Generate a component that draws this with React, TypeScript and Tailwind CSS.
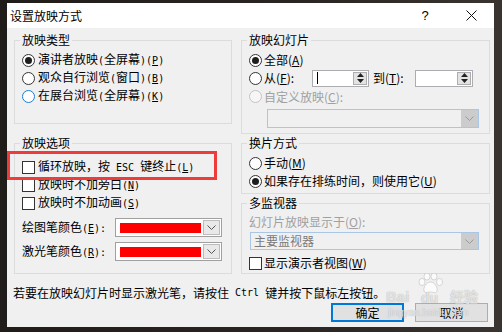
import React from "react";

// splits a label into CJK / ASCII runs; "&" marks the access-key letter
function Txt({ s, mono = false }: { s: string; mono?: boolean }) {
  const parts: { t: string; ascii: boolean; u: boolean }[] = [];
  for (let i = 0; i < s.length; i++) {
    let c = s[i];
    let u = false;
    if (c === "&") {
      u = true;
      c = s[++i];
    }
    const ascii = c.charCodeAt(0) < 128;
    const last = parts[parts.length - 1];
    if (last && last.ascii === ascii && !u && !last.u) last.t += c;
    else parts.push({ t: c, ascii, u });
  }
  return (
    <>
      {parts.map((p, i) => {
        const cls = p.ascii && mono ? "font-['DejaVu_Sans_Mono',monospace] text-[10px]" : "";
        return p.u ? (
          <u key={i} className={cls + " underline-offset-[1px]"}>
            {p.t}
          </u>
        ) : (
          <span key={i} className={cls + " whitespace-pre"}>
            {p.t}
          </span>
        );
      })}
    </>
  );
}

function Radio({ on = false, blue = false, disabled = false }: { on?: boolean; blue?: boolean; disabled?: boolean }) {
  return (
    <span
      className={`w-[13px] h-[13px] rounded-full border flex items-center justify-center shrink-0 ${
        disabled ? "border-[#c4c4c4] bg-[#f6f6f6]" : blue ? "border-[#1a7fd4] bg-white" : "border-[#333333] bg-white"
      }`}
    >
      {on && <span className="w-[7px] h-[7px] rounded-full bg-[#1e1e1e]" />}
    </span>
  );
}

function Check() {
  return <span className="w-[13px] h-[13px] border border-[#333333] bg-white shrink-0" />;
}

function Chevron({ color = "#555" }: { color?: string }) {
  return (
    <svg width="9" height="5" viewBox="0 0 9 5">
      <path d="M0.5 0.5 L4.5 4.5 L8.5 0.5" fill="none" stroke={color} strokeWidth="1" />
    </svg>
  );
}

function ColorCombo() {
  return (
    <div className="w-[107px] h-[19px] border border-[#a0a0a0] bg-white flex items-center pl-[4px] pr-[1px]">
      <div className="w-[81px] h-[10px] bg-[#ff0000]" />
      <div className="ml-auto w-[17px] h-[15px] border border-[#bcbcbc] bg-[#e9e9e9] flex items-center justify-center">
        <Chevron />
      </div>
    </div>
  );
}

function Spin({ w, caret = false }: { w: string; caret?: boolean }) {
  return (
    <div className={`${w} h-[17px] border border-[#abadb3] bg-white flex items-center`}>
      {caret && <span className="ml-[4px] w-px h-[12px] bg-black" />}
      <div className="ml-auto mr-px w-[14px] h-[13px] border border-[#adadad] bg-[#e3e3e3] flex flex-col items-center justify-center gap-[2px]">
        <svg width="7" height="4" viewBox="0 0 7 4">
          <path d="M0 4 L3.5 0 L7 4 Z" fill="#222" />
        </svg>
        <svg width="7" height="4" viewBox="0 0 7 4">
          <path d="M0 0 L3.5 4 L7 0 Z" fill="#222" />
        </svg>
      </div>
    </div>
  );
}

function Group({ title, h, className = "", children }: { title: string; h: string; className?: string; children: React.ReactNode }) {
  return (
    <fieldset className={`border border-[#dcdcdc] p-0 m-0 min-w-0 ${h} ${className}`}>
      <legend className="ml-[5px] px-[2px] leading-[16px]">
        <Txt s={title} />
      </legend>
      {children}
    </fieldset>
  );
}

export default function App() {
  return (
    <div className="w-[502px] h-[332px] overflow-hidden bg-[linear-gradient(90deg,#201c1a_0,#2a2522_60%,#3a3431_100%)] pl-[7px] pt-[3px] font-['Noto_Sans_CJK_SC',sans-serif] text-[12px] leading-[16px] text-black">
      <div className="relative w-[487px] h-[324px] flex flex-col bg-[#f0f0f0]">
        {/* Title bar */}
        <div className="h-[25px] bg-white flex items-center pl-[3px] shrink-0">
          <span>设置放映方式</span>
          <div className="ml-auto flex h-full">
            <div className="w-[46px] flex items-center justify-center font-['Liberation_Sans',sans-serif] text-[13px]">?</div>
            <div className="w-[46px] flex items-center justify-center">
              <svg width="11" height="11" viewBox="0 0 11 11">
                <path d="M0.5 0.5 L10.5 10.5 M10.5 0.5 L0.5 10.5" stroke="#111" strokeWidth="1" />
              </svg>
            </div>
          </div>
        </div>

        {/* Body */}
        <div className="flex-1 flex flex-col pt-[4px] pl-[7px] pr-[4px]">
          <div className="flex gap-[9px]">
            {/* Left column */}
            <div className="w-[218px] flex flex-col">
              <Group title="放映类型" h="h-[92px]">
                <div className="pl-[7px] pt-[3px]">
                  <div className="h-[18px] flex items-center gap-[3px]">
                    <Radio on />
                    <span><Txt mono s="演讲者放映(全屏幕)(&P)" /></span>
                  </div>
                  <div className="h-[18px] flex items-center gap-[3px]">
                    <Radio />
                    <span><Txt mono s="观众自行浏览(窗口)(&B)" /></span>
                  </div>
                  <div className="h-[18px] flex items-center gap-[3px]">
                    <Radio blue />
                    <span><Txt mono s="在展台浏览(全屏幕)(&K)" /></span>
                  </div>
                </div>
              </Group>

              <Group title="放映选项" h="h-[139px]" className="mt-[11px]">
                <div className="pl-[7px] pt-[7px]">
                  <div className="h-[18px] flex items-center gap-[3px]">
                    <Check />
                    <span><Txt mono s="循环放映，按 ESC 键终止(&L)" /></span>
                  </div>
                  <div className="h-[18px] flex items-center gap-[3px]">
                    <Check />
                    <span><Txt mono s="放映时不加旁白(&N)" /></span>
                  </div>
                  <div className="h-[18px] flex items-center gap-[3px]">
                    <Check />
                    <span><Txt mono s="放映时不加动画(&S)" /></span>
                  </div>
                  <div className="mt-[6px] h-[19px] flex items-center">
                    <span className="w-[93px]"><Txt mono s="绘图笔颜色(&E):" /></span>
                    <ColorCombo />
                  </div>
                  <div className="mt-[5px] h-[19px] flex items-center">
                    <span className="w-[93px]"><Txt mono s="激光笔颜色(&R):" /></span>
                    <ColorCombo />
                  </div>
                </div>
              </Group>
            </div>

            {/* Right column */}
            <div className="w-[249px] flex flex-col">
              <Group title="放映幻灯片" h="h-[102px]">
                <div className="pl-[7px] pt-[3px]">
                  <div className="h-[18px] flex items-center gap-[2px]">
                    <Radio on />
                    <span><Txt s="全部(&A)" /></span>
                  </div>
                  <div className="h-[18px] flex items-center">
                    <Radio />
                    <span className="w-[50px] pl-[2px]"><Txt s="从(&F):" /></span>
                    <Spin w="w-[57px]" caret />
                    <span className="w-[46px] pl-[4px]"><Txt s="到(&T):" /></span>
                    <Spin w="w-[58px]" />
                  </div>
                  <div className="h-[19px] flex items-center gap-[2px] text-[#a0a0a0]">
                    <Radio disabled />
                    <span><Txt s="自定义放映(&C):" /></span>
                  </div>
                  <div className="mt-[3px] ml-[18px] w-[212px] h-[19px] border border-[#aac6e6] bg-[#f0f0f0] flex items-center">
                    <div className="ml-auto w-[17px] h-full bg-[#cccccc] flex items-center justify-center">
                      <Chevron color="#9a9a9a" />
                    </div>
                  </div>
                </div>
              </Group>

              <Group title="换片方式" h="h-[59px]" className="mt-[1px]">
                <div className="pl-[7px] pt-[3px]">
                  <div className="h-[18px] flex items-center gap-[2px]">
                    <Radio />
                    <span><Txt s="手动(&M)" /></span>
                  </div>
                  <div className="h-[18px] flex items-center gap-[2px]">
                    <Radio on />
                    <span><Txt s="如果存在排练时间，则使用它(&U)" /></span>
                  </div>
                </div>
              </Group>

              <Group title="多监视器" h="h-[79px]" className="mt-[1px]">
                <div className="pl-[7px] pt-[2px]">
                  <div className="h-[18px] flex items-center text-[#a0a0a0]">
                    <Txt s="幻灯片放映显示于(&O):" />
                  </div>
                  <div className="mt-[1px] ml-[1px] w-[229px] h-[18px] border border-[#aac6e6] bg-[#f0f0f0] flex items-center pl-[3px] text-[#7a7a7a]">
                    <span>主要监视器</span>
                    <div className="ml-auto w-[17px] h-full bg-[#cccccc] flex items-center justify-center">
                      <Chevron color="#9a9a9a" />
                    </div>
                  </div>
                  <div className="mt-[4px] h-[18px] flex items-center gap-[2px]">
                    <Check />
                    <span><Txt s="显示演示者视图(&W)" /></span>
                  </div>
                </div>
              </Group>
            </div>
          </div>

          <div className="mt-[11px] -ml-[1px] h-[16px] flex items-center">
            <Txt mono s="若要在放映幻灯片时显示激光笔，请按住 Ctrl 键并按下鼠标左按钮。" />
          </div>

          <div className="mt-[2px] flex justify-end gap-[11px] pr-[2px]">
            <div className="w-[73px] h-[19px] border-2 border-[#0078d7] bg-[#e1e1e1] flex items-center justify-center">确定</div>
            <div className="w-[73px] h-[19px] border border-[#adadad] bg-[#e1e1e1] flex items-center justify-center">取消</div>
          </div>
        </div>

        {/* Red annotation box */}
        <div className="absolute left-0 top-[148px] w-[210px] h-[29px] border-[3px] border-[#ee3b3b]" />

        {/* Baidu watermark */}
        <div className="absolute left-[378px] top-[269px] w-[100px] h-[50px] text-white/70 pointer-events-none [text-shadow:0_0_1px_#9a9a9a]">
          <svg className="absolute left-[33px] top-[1px]" width="26" height="21" viewBox="0 0 26 21" fill="rgba(255,255,255,0.75)" stroke="#bdbdbd" strokeWidth="0.6">
            <ellipse cx="4" cy="9" rx="3" ry="3.6" />
            <ellipse cx="9" cy="3.5" rx="3" ry="3.5" />
            <ellipse cx="16" cy="3.5" rx="3" ry="3.5" />
            <ellipse cx="21.5" cy="9" rx="3" ry="3.6" />
            <path d="M12.5 9 C8 9 5 15 6 18 C7 21 10 19 12.5 19 C15 19 18 21 19 18 C20 15 17 9 12.5 9 Z" />
          </svg>
          <span className="absolute left-[1px] top-[17px] font-['Liberation_Sans',sans-serif] font-bold text-[15px] leading-[16px]">Bai</span>
          <span className="absolute left-[36px] top-[18px] font-['Liberation_Sans',sans-serif] font-bold text-[14px] leading-[16px]">du</span>
          <span className="absolute left-[65px] top-[16px] font-bold text-[14px] leading-[16px]">经验</span>
          <span className="absolute left-[3px] top-[35px] font-['Liberation_Sans',sans-serif] text-[10px] leading-[12px]">jingyan.baidu.com</span>
        </div>
      </div>
    </div>
  );
}
